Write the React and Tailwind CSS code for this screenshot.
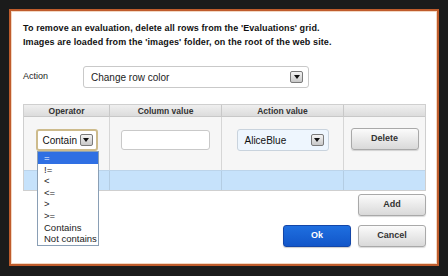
import React from 'react';

const font = { fontFamily: '"Liberation Sans", Arial, sans-serif' };

const Arrow = ({ className = '' }) => (
  <span
    className={`flex items-center justify-center w-[13px] h-[12px] border border-[#7a7a7a] rounded-[2px] bg-gradient-to-b from-[#f4f4f4] to-[#c8c8c8] ${className}`}
  >
    <svg width="6" height="4" viewBox="0 0 6 4">
      <path d="M0 0H6L3 4Z" fill="#111" />
    </svg>
  </span>
);

const GrayButton = ({ children, className = '' }) => (
  <button
    className={`w-[68px] h-[22px] rounded-[3px] border border-[#a9a9a9] bg-gradient-to-b from-[#fbfbfb] to-[#d9d9d9] text-[9px] font-bold text-[#333] shadow-[0_1px_1px_rgba(0,0,0,0.15)] ${className}`}
  >
    {children}
  </button>
);

const operators = ['=', '!=', '<', '<=', '>', '>=', 'Contains', 'Not contains'];

export default function App() {
  return (
    <div className="w-[448px] h-[276px] bg-[#1b1b1b] pt-[9px] pl-[9px]" style={font}>
      <div className="w-[430px] h-[257px] bg-white border-2 border-[#bf5c2c] shadow-[inset_0_0_0_1px_#f3d7c2] pt-[10px] pl-[12px] pr-[10px] flex flex-col">
        <div className="text-[9px] font-bold leading-[14px] text-[#111] tracking-[0.1px]">
          <p>To remove an evaluation, delete all rows from the 'Evaluations' grid.</p>
          <p>Images are loaded from the 'images' folder, on the root of the web site.</p>
        </div>

        <div className="flex items-center mt-[17px] h-[22px]">
          <span className="w-[60px] text-[9px] text-[#222]">Action</span>
          <div className="w-[226px] h-[22px] border border-[#c9c9c9] rounded-[3px] flex items-center justify-between pl-[7px] pr-[5px]">
            <span className="text-[10px] text-[#222]">Change row color</span>
            <Arrow />
          </div>
        </div>

        <div className="mt-[16px] w-[403px] border border-[#cfcfcf] text-[#222]">
          <div className="grid grid-cols-[86px_112px_122px_1fr] h-[12px] bg-gradient-to-b from-[#efefef] to-[#dcdcdc] border-b border-[#c8c8c8] text-[8.5px] font-bold text-[#333] leading-[12px] text-center">
            <div className="border-r border-[#c8c8c8]">Operator</div>
            <div className="border-r border-[#c8c8c8]">Column value</div>
            <div className="border-r border-[#c8c8c8]">Action value</div>
            <div></div>
          </div>

          <div className="grid grid-cols-[86px_112px_122px_1fr] h-[53px] bg-[#f6f6f6]">
            <div className="border-r border-[#d6d6d6] flex justify-center pt-[12px] relative">
              <div className="w-[62px] h-[22px] border-2 border-[#cdbb8c] rounded-[3px] bg-white flex items-center justify-between pl-[5px] pr-[3px]">
                <span className="text-[10px] text-[#111]">Contain</span>
                <Arrow />
              </div>
              <div className="absolute left-[13px] top-[34px] w-[62px] border border-[#8a9fb5] bg-white z-10 py-[0px]">
                {operators.map((op, i) => (
                  <div
                    key={op}
                    className={`h-[11.6px] leading-[11.6px] text-[9.5px] pl-[6px] ${
                      i === 0 ? 'bg-[#2f6fe3] text-white' : 'text-[#222]'
                    }`}
                  >
                    {op}
                  </div>
                ))}
              </div>
            </div>
            <div className="border-r border-[#d6d6d6] flex justify-center pt-[13px]">
              <div className="w-[89px] h-[20px] border border-[#c9c9c9] rounded-[3px] bg-white"></div>
            </div>
            <div className="border-r border-[#d6d6d6] flex justify-center pt-[12px]">
              <div className="w-[92px] h-[22px] border border-[#c9d3dd] rounded-[3px] bg-[#eef6fe] flex items-center justify-between pl-[7px] pr-[4px]">
                <span className="text-[10px] text-[#111]">AliceBlue</span>
                <Arrow />
              </div>
            </div>
            <div className="flex justify-center pt-[11px]">
              <GrayButton>Delete</GrayButton>
            </div>
          </div>

          <div className="grid grid-cols-[86px_112px_122px_1fr] h-[20px] bg-[#c6e2fb] border-t border-[#bcd4ea]">
            <div className="border-r border-[#b4cde3]"></div>
            <div className="border-r border-[#b4cde3]"></div>
            <div className="border-r border-[#b4cde3]"></div>
            <div></div>
          </div>
        </div>

        <div className="w-[403px] flex justify-end mt-[3px]">
          <GrayButton>Add</GrayButton>
        </div>

        <div className="w-[403px] flex justify-end gap-[7px] mt-[9px]">
          <button className="w-[68px] h-[22px] rounded-[3px] border border-[#1346a8] bg-gradient-to-b from-[#1f6fe0] to-[#1256c9] text-[9px] font-bold text-white shadow-[0_1px_1px_rgba(0,0,0,0.2)]">
            Ok
          </button>
          <GrayButton>Cancel</GrayButton>
        </div>
      </div>
    </div>
  );
}
